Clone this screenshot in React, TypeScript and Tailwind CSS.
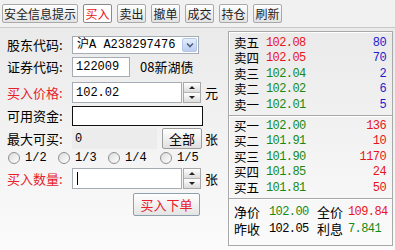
import React from "react";

const cjk = "font-['Noto_Sans_CJK_SC',sans-serif]";
const mono = "font-['Liberation_Mono','Noto_Sans_CJK_SC',monospace]";

const ToolButton = ({ label, active, wide }: { label: string; active?: boolean; wide?: boolean }) => (
  <div
    className={`h-[19px] flex items-center justify-center rounded-[2px] border text-[12px] leading-none ${
      wide ? "px-[1px]" : "w-[29px]"
    } ${
      active
        ? "border-[#8a8a8a] bg-white text-[#e8141c]"
        : "border-[#a9a9a9] bg-gradient-to-b from-white to-[#e2e2e2] text-[#222]"
    }`}
  >
    {label}
  </div>
);

const Spin = () => (
  <div className="ml-[1px] w-[18px] h-full flex flex-col border border-[#a9a9a9] bg-[#ededed]">
    <div className="flex-1 flex items-center justify-center bg-gradient-to-b from-white to-[#dcdcdc] border-b border-[#b4b4b4]">
      <span className="w-0 h-0 border-l-[3px] border-r-[3px] border-b-[3px] border-l-transparent border-r-transparent border-b-[#222]" />
    </div>
    <div className="flex-1 flex items-center justify-center bg-gradient-to-b from-white to-[#dcdcdc]">
      <span className="w-0 h-0 border-l-[3px] border-r-[3px] border-t-[3px] border-l-transparent border-r-transparent border-t-[#222]" />
    </div>
  </div>
);

const Radio = ({ label, w }: { label: string; w: string }) => (
  <div className={`flex items-center ${w}`}>
    <span className="w-[12px] h-[12px] rounded-full border border-[#8e8f8f] bg-gradient-to-br from-[#dcdcdc] to-white" />
    <span className={`ml-[5px] text-[12px] ${mono}`}>{label}</span>
  </div>
);

const Label = ({ text, red }: { text: string; red?: boolean }) => (
  <div className={`w-[65px] shrink-0 text-[13px] ${red ? "text-[#e8202a]" : "text-black"}`}>{text}</div>
);

const red = "text-[#e8141c]";
const green = "text-[#168a16]";
const blue = "text-[#1c1cd0]";
const num = `text-[12px] tracking-[-0.6px] leading-none ${mono}`;

const QuoteRow = ({ name, price, pc, vol, vc }: { name: string; price: string; pc: string; vol: string; vc: string }) => (
  <div className="h-[15.5px] flex items-center pl-[5px] pr-[6px]">
    <span className="w-[32px] text-[12.5px] leading-[14px]">{name}</span>
    <span className={`${num} ${pc}`}>{price}</span>
    <span className={`ml-auto ${num} ${vc}`}>{vol}</span>
  </div>
);

export default function App() {
  const sells = [
    { name: "卖五", price: "102.08", pc: red, vol: "80" },
    { name: "卖四", price: "102.05", pc: red, vol: "70" },
    { name: "卖三", price: "102.04", pc: green, vol: "2" },
    { name: "卖二", price: "102.02", pc: green, vol: "6" },
    { name: "卖一", price: "102.01", pc: green, vol: "5" },
  ];
  const buys = [
    { name: "买一", price: "102.00", vol: "136" },
    { name: "买二", price: "101.91", vol: "10" },
    { name: "买三", price: "101.90", vol: "1170" },
    { name: "买四", price: "101.85", vol: "24" },
    { name: "买五", price: "101.81", vol: "50" },
  ];

  return (
    <div className={`w-[395px] h-[250px] overflow-hidden bg-gradient-to-b from-[#e8e8e8] to-[#fbfbfb] text-black ${cjk}`}>
      {/* toolbar */}
      <div className="h-[28px] pt-[4px] pl-[2px] flex items-start gap-[5px] bg-[#f1f1f1] border-b border-[#c9c9c9]">
        <ToolButton label="安全信息提示" wide />
        <ToolButton label="买入" active />
        <ToolButton label="卖出" />
        <ToolButton label="撤单" />
        <ToolButton label="成交" />
        <ToolButton label="持仓" />
        <ToolButton label="刷新" />
      </div>

      <div className="flex">
        {/* order form */}
        <div className="w-[228px] shrink-0 pl-[7px] pt-[8px] flex flex-col">
          <div className="h-[18px] flex items-center">
            <Label text="股东代码:" />
            <div className="w-[127px] h-full flex items-center border border-[#a5acb5] bg-white">
              <span className={`pl-[4px] text-[12px] leading-none ${mono}`}>沪A A238297476</span>
              <div className="ml-auto mr-[1px] w-[15px] h-[14px] flex items-center justify-center rounded-[2px] border border-[#b3c7e8] bg-gradient-to-b from-[#e6eefc] to-[#bccdf0]">
                <svg width="8" height="6" viewBox="0 0 8 6">
                  <path d="M1 1.5 L4 4.5 L7 1.5" fill="none" stroke="#4d6185" strokeWidth="1.6" />
                </svg>
              </div>
            </div>
          </div>

          <div className="mt-[3px] h-[20px] flex items-center">
            <Label text="证券代码:" />
            <div className={`w-[58px] h-full flex items-center pl-[3px] border border-[#a5acb5] bg-white text-[12px] ${mono}`}>122009</div>
            <span className="ml-[10px] text-[13px]">08新湖债</span>
          </div>

          <div className="mt-[5px] h-[21px] flex items-center">
            <Label text="买入价格:" red />
            <div className={`w-[110px] h-full flex items-center pl-[3px] border border-[#a5acb5] bg-white text-[12px] ${mono}`}>102.02</div>
            <Spin />
            <span className="ml-[4px] text-[13px]">元</span>
          </div>

          <div className="mt-[3px] h-[20px] flex items-center">
            <Label text="可用资金:" />
            <div className="w-[131px] h-full border border-[#111] bg-white" />
          </div>

          <div className="mt-[2px] h-[21px] flex items-center">
            <Label text="最大可买:" />
            <div className={`w-[85px] h-full flex items-center pl-[3px] bg-[#ececec] text-[12px] ${mono}`}>0</div>
            <div className="ml-[5px] w-[40px] h-full flex items-center justify-center rounded-[2px] border border-[#9d9d9d] bg-gradient-to-b from-white to-[#e0e0e0] text-[13px]">全部</div>
            <span className="ml-[3px] text-[13px]">张</span>
          </div>

          <div className="mt-[2px] h-[13px] pl-[1px] flex items-center">
            <Radio label="1/2" w="w-[50px]" />
            <Radio label="1/3" w="w-[50px]" />
            <Radio label="1/4" w="w-[52px]" />
            <Radio label="1/5" w="w-[40px]" />
          </div>

          <div className="mt-[4px] h-[21px] flex items-center">
            <Label text="买入数量:" red />
            <div className="w-[110px] h-full flex items-center pl-[4px] border border-[#a5acb5] bg-white">
              <span className="w-[1px] h-[13px] bg-black" />
            </div>
            <Spin />
            <span className="ml-[4px] text-[13px]">张</span>
          </div>

          <div className="mt-[4px] h-[23px] pl-[126px] flex">
            <div className="w-[67px] h-full flex items-center justify-center rounded-[2px] border border-[#8fa0ad] bg-gradient-to-b from-white to-[#e4e4e4] text-[13px] text-[#e8202a]">
              买入下单
            </div>
          </div>
        </div>

        {/* quote panel */}
        <div className="mt-[3px] w-[165px] h-[215px] flex flex-col border border-[#a8a8a8] shadow-[inset_1px_1px_0_white]">
          <div className="h-[83px] pt-[3px]">
            {sells.map((s) => (
              <QuoteRow key={s.name} name={s.name} price={s.price} pc={s.pc} vol={s.vol} vc={blue} />
            ))}
          </div>
          <div className="h-[83px] pt-[2px] border-t border-[#a8a8a8] shadow-[inset_0_1px_0_white]">
            {buys.map((b) => (
              <QuoteRow key={b.name} name={b.name} price={b.price} pc={green} vol={b.vol} vc={red} />
            ))}
          </div>
          <div className="flex-1 pt-[4px] border-t border-[#a8a8a8] shadow-[inset_0_1px_0_white] text-[13px]">
            <div className="h-[17px] flex items-center pl-[5px] leading-none">
              <span className="w-[35px]">净价</span>
              <span className={`w-[48px] ${num} ${green}`}>102.00</span>
              <span className="w-[31px]">全价</span>
              <span className={`${num} ${red}`}>109.84</span>
            </div>
            <div className="h-[17px] flex items-center pl-[5px] leading-none">
              <span className="w-[35px]">昨收</span>
              <span className={`w-[48px] ${num}`}>102.05</span>
              <span className="w-[31px]">利息</span>
              <span className={`${num} ${green}`}>7.841</span>
            </div>
          </div>
        </div>
      </div>
    </div>
  );
}
